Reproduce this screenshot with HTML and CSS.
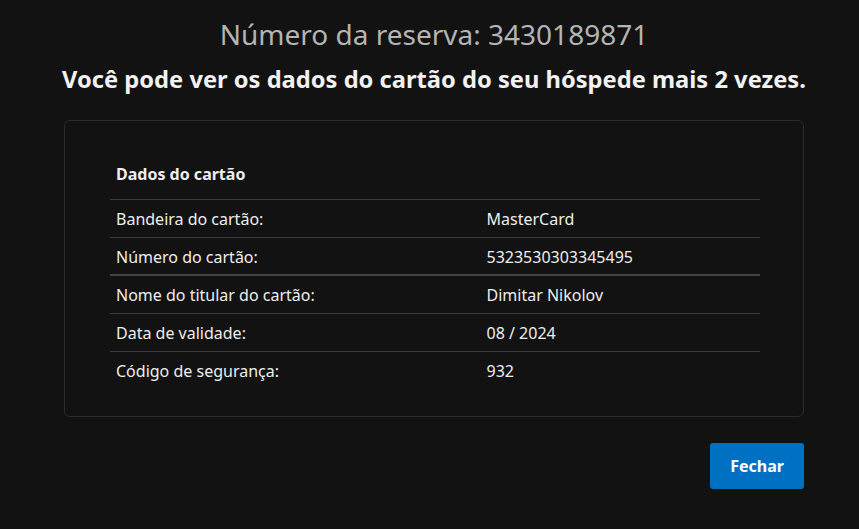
FILE: index.html
```html
<!DOCTYPE html>
<html lang="pt-BR">
<head>
  <meta charset="UTF-8">
  <title>Dados do cartão</title>
  <link rel="stylesheet" href="styles.css">
</head>
<body>
  <div class="page">
    <h1 class="title">Número da reserva: 3430189871</h1>
    <h2 class="subtitle">Você pode ver os dados do cartão do seu hóspede mais 2 vezes.</h2>

    <div class="card">
      <table class="card-table">
        <thead>
          <tr>
            <th colspan="2">Dados do cartão</th>
          </tr>
        </thead>
        <tbody>
          <tr>
            <td>Bandeira do cartão:</td>
            <td>MasterCard</td>
          </tr>
          <tr class="thick">
            <td>Número do cartão:</td>
            <td>5323530303345495</td>
          </tr>
          <tr>
            <td>Nome do titular do cartão:</td>
            <td>Dimitar Nikolov</td>
          </tr>
          <tr>
            <td>Data de validade:</td>
            <td>08 / 2024</td>
          </tr>
          <tr>
            <td>Código de segurança:</td>
            <td>932</td>
          </tr>
        </tbody>
      </table>
    </div>

    <div class="actions">
      <button class="btn">Fechar</button>
    </div>
  </div>
</body>
</html>
```

FILE: styles.css
```css
* {
  box-sizing: border-box;
}

html, body {
  margin: 0;
  padding: 0;
  background: #121212;
  color: #eee;
  font-family: 'Noto Sans', sans-serif;
}

.page {
  width: 740px;
  margin-left: 64px;
  padding-top: 14px;
}

.title {
  margin: 0;
  text-align: center;
  font-size: 28px;
  font-weight: 400;
  color: #b4b4b4;
  line-height: 40px;
}

.subtitle {
  margin: 9px -20px 0;
  text-align: center;
  font-size: 23.7px;
  font-weight: 700;
  color: #f2f2f2;
  line-height: 32px;
  white-space: nowrap;
}

.card {
  margin-top: 25px;
  border: 1px solid #2a2d2d;
  border-radius: 6px;
  padding: 29px 43px 27px 45px;
}

.card-table {
  width: 100%;
  border-collapse: collapse;
  font-size: 16px;
}

.card-table th {
  text-align: left;
  font-weight: 700;
  padding: 12px 6px 13px;
  line-height: 24px;
  border-bottom: 1px solid #3a3a3a;
}

.card-table td {
  padding: 7px 6px 6px;
  line-height: 24px;
  border-bottom: 1px solid #3a3a3a;
  width: 57%;
}

.card-table td + td {
  width: auto;
}

.card-table tr.thick td {
  padding-bottom: 5px;
  border-bottom: 2px solid #444;
}

.card-table tbody tr:last-child td {
  border-bottom: 0;
}

.actions {
  display: flex;
  justify-content: flex-end;
  margin-top: 26px;
}

.btn {
  background: #0071c2;
  color: #fff;
  border: 0;
  border-radius: 3px;
  font-family: inherit;
  font-size: 16px;
  font-weight: 700;
  padding: 0 20px;
  height: 46px;
  cursor: pointer;
}
```
